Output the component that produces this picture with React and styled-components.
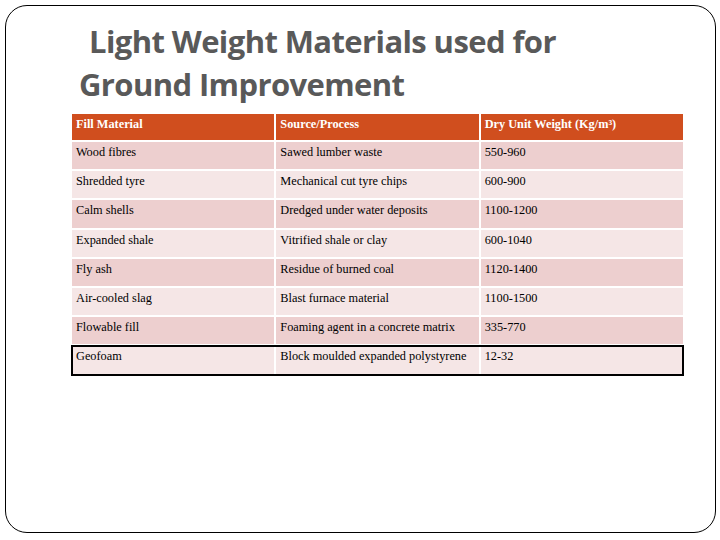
import React from 'react'
import styled, { createGlobalStyle } from 'styled-components'

const GlobalStyle = createGlobalStyle`
  html, body {
    margin: 0;
    padding: 0;
    background: #ffffff;
  }
`

const ROWS = [
  ['Wood fibres', 'Sawed lumber waste', '550-960'],
  ['Shredded tyre', 'Mechanical cut tyre chips', '600-900'],
  ['Calm shells', 'Dredged under water deposits', '1100-1200'],
  ['Expanded shale', 'Vitrified shale or clay', '600-1040'],
  ['Fly ash', 'Residue of burned coal', '1120-1400'],
  ['Air-cooled slag', 'Blast furnace material', '1100-1500'],
  ['Flowable fill', 'Foaming agent in a concrete matrix', '335-770'],
  ['Geofoam', 'Block moulded expanded polystyrene', '12-32']
]

const Slide = styled.div`
  box-sizing: border-box;
  width: 711px;
  height: 528px;
  margin: 5px 0 0 5px;
  border: 1px solid #000;
  border-radius: 22px;
  padding: 14px 0 0 64px;
`

const Title = styled.h1`
  margin: 0;
  font-family: "Open Sans", sans-serif;
  font-weight: 700;
  font-size: 31px;
  line-height: 43px;
  letter-spacing: -0.6px;
  color: #595959;
  padding-left: 9px;
`

const Indent = styled.span`
  padding-left: 10px;
`

const Table = styled.table`
  margin-top: 6px;
  border-collapse: separate;
  border-spacing: 2px;
  width: 615px;
  table-layout: fixed;
  font-family: "Liberation Serif", "Times New Roman", serif;
  font-size: 12.3px;
  color: #000;
`

const HeadCell = styled.th`
  background: #d04e1e;
  color: #fff;
  font-weight: 700;
  text-align: left;
  vertical-align: top;
  height: 26px;
  padding: 3px 4px 0;
  box-sizing: border-box;
`

const Row = styled.tr`
  background: ${p => (p.$odd ? '#edcfcf' : '#f5e6e6')};
  outline: ${p => (p.$framed ? '2px solid #000' : 'none')};
  outline-offset: -1px;
`

const Cell = styled.td`
  vertical-align: top;
  height: ${p => (p.$tall ? '29px' : '27.2px')};
  padding: 3px 4px 0;
  box-sizing: border-box;
`

export default function App() {
  return (
    <>
      <GlobalStyle />
      <Slide>
        <Title>
          <Indent>Light Weight Materials used for</Indent>
          <br />
          Ground Improvement
        </Title>
        <Table>
          <thead>
            <tr>
              <HeadCell>Fill Material</HeadCell>
              <HeadCell>Source/Process</HeadCell>
              <HeadCell>Dry Unit Weight (Kg/m³)</HeadCell>
            </tr>
          </thead>
          <tbody>
            {ROWS.map((r, i) => {
              const last = i === ROWS.length - 1
              return (
                <Row key={r[0]} $odd={i % 2 === 0} $framed={last}>
                  {r.map(c => (
                    <Cell key={c} $tall={last}>{c}</Cell>
                  ))}
                </Row>
              )
            })}
          </tbody>
        </Table>
      </Slide>
    </>
  )
}
